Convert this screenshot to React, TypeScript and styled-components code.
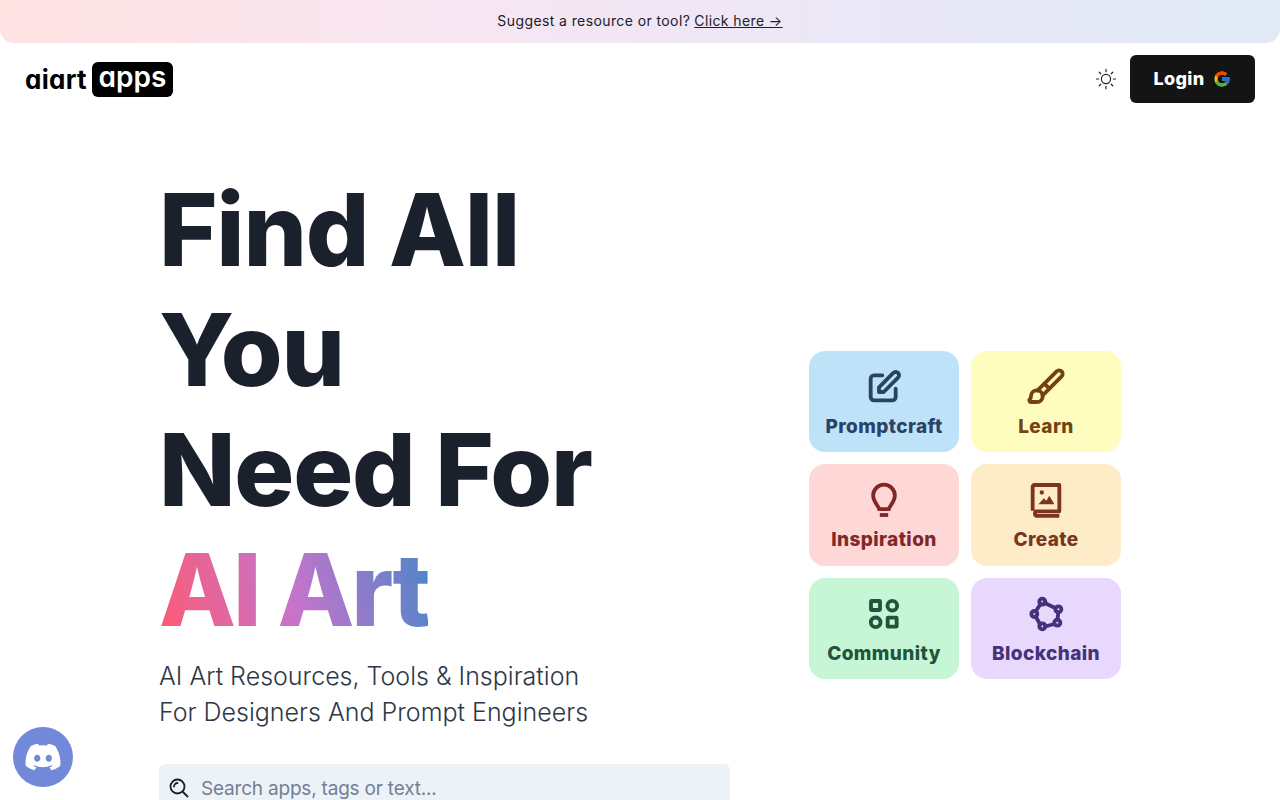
import React from 'react'
import styled, { createGlobalStyle } from 'styled-components'
import { Brush } from 'lucide-react'
import { FaDiscord } from 'react-icons/fa'
import { FcGoogle } from 'react-icons/fc'

const GlobalStyle = createGlobalStyle`
  html, body {
    margin: 0;
    height: 100%;
    overflow: hidden;
    background: #fff;
    font-family: Inter, "Open Sans", sans-serif;
    color: #1a202c;
  }
`

const Banner = styled.div`
  height: 43px;
  padding-bottom: 2px;
  box-sizing: border-box;
  display: flex;
  align-items: center;
  justify-content: center;
  gap: 4px;
  font-size: 14px;
  letter-spacing: 0.4px;
  color: #1a202c;
  border-radius: 0 0 14px 14px;
  background: linear-gradient(90deg, #fee2e2 0%, #f7e6f2 35%, #ebe7f6 65%, #e1eaf6 100%);
`

const BannerLink = styled.a`
  text-decoration: underline;
  color: inherit;
`

const Nav = styled.header`
  height: 72px;
  display: flex;
  align-items: center;
  justify-content: space-between;
  padding: 0 25px 0 25px;
`

const Logo = styled.div`
  display: flex;
  align-items: center;
  gap: 5px;
  font-size: 26px;
  font-weight: 700;
  letter-spacing: 0.3px;
  font-feature-settings: 'cv11';
  color: #000;
`

const LogoPill = styled.span`
  width: 81px;
  height: 35px;
  display: flex;
  align-items: center;
  justify-content: center;
  background: #000;
  color: #fff;
  border-radius: 6px;
  font-size: 28px;
  font-weight: 600;
  line-height: 30px;
  letter-spacing: 0;
  padding-bottom: 5px;
  box-sizing: border-box;
`

const NavActions = styled.div`
  display: flex;
  align-items: center;
  gap: 13px;
`

const LoginButton = styled.button`
  width: 125px;
  height: 48px;
  padding-bottom: 2px;
  display: flex;
  align-items: center;
  justify-content: center;
  gap: 9px;
  background: #141414;
  color: #fff;
  border: 0;
  border-radius: 6px;
  font-family: inherit;
  font-size: 18px;
  font-weight: 800;
  letter-spacing: 0.3px;
`

const Hero = styled.main`
  display: grid;
  grid-template-columns: 571px 312px;
  column-gap: 79px;
  height: 745px;
  padding: 55px 0 0 159px;
  box-sizing: border-box;
`

const HeroLeft = styled.div`
  display: flex;
  flex-direction: column;
`

const Heading = styled.h1`
  margin: 0;
  font-size: 100px;
  line-height: 120px;
  font-weight: 800;
  letter-spacing: -1.2px;
  color: #1a202c;
`

const HeadingLine = styled.span`
  display: block;
`

const GradientText = styled.span`
  display: inline-block;
  letter-spacing: -3px;
  background: linear-gradient(75deg, #ff5a70 0%, #c474cc 50%, #4a86c8 100%);
  -webkit-background-clip: text;
  background-clip: text;
  color: transparent;
`

const SubText = styled.p`
  margin: 8px 0 0;
  font-size: 25px;
  line-height: 36px;
  font-weight: 300;
  color: #2d3748;
`

const SearchBox = styled.div`
  margin-top: 34px;
  width: 571px;
  height: 48px;
  flex: none;
  display: flex;
  align-items: center;
  gap: 12px;
  padding: 0 10px;
  box-sizing: border-box;
  background: #edf2f7;
  border-radius: 6px;
  font-size: 19px;
  letter-spacing: -0.2px;
  color: #718096;
`

const CardGrid = styled.nav`
  align-self: center;
  display: grid;
  grid-template-columns: 150px 150px;
  grid-auto-rows: 101.67px;
  gap: 12px;
`

const Card = styled.a<{ $bg: string; $fg: string }>`
  display: flex;
  flex-direction: column;
  align-items: center;
  padding-top: 16px;
  box-sizing: border-box;
  gap: 6px;
  border-radius: 16px;
  background: ${(p) => p.$bg};
  color: ${(p) => p.$fg};
  font-size: 19px;
  font-weight: 800;
  line-height: 27px;
  letter-spacing: 0.4px;
  text-decoration: none;
`

const DiscordFab = styled.a`
  position: fixed;
  left: 13px;
  top: 727px;
  width: 60px;
  height: 60px;
  display: flex;
  align-items: center;
  justify-content: center;
  border-radius: 50%;
  background: #7289da;
  color: #fff;
`

function IconBase({ children }: { children: React.ReactNode }) {
  return (
    <svg width="40" height="40" viewBox="0 0 24 24" fill="none" stroke="currentColor" strokeWidth="2.300" strokeLinecap="round" strokeLinejoin="round">
      {children}
    </svg>
  )
}

const PencilIcon = () => (
  <IconBase>
    <path d="M11 5H6a2 2 0 0 0-2 2v11a2 2 0 0 0 2 2h11a2 2 0 0 0 2-2v-5m-1.414-9.414a2 2 0 1 1 2.828 2.828L11.828 15H9v-2.828l8.586-8.586z" />
  </IconBase>
)

const BulbIcon = () => (
  <IconBase>
    <path d="M9 17.500c0-2-3.500-4-3.500-8.200a6.500 6.500 0 0 1 13 0c0 4.200-3.500 6.200-3.500 8.200z" />
    <path d="M9.500 21h5" strokeLinecap="butt" />
  </IconBase>
)

const ImageBookIcon = () => (
  <IconBase>
    <path d="M4 18.500V4a1 1 0 0 1 1-1h15v15.800H6a1.700 1.700 0 0 0 0 2.700h14" strokeLinecap="butt" />
    <circle cx="9.500" cy="7.500" r="1.300" fill="currentColor" stroke="none" />
    <path d="M7.500 14.500l3.200-3.500 1.500 1.500 1.800-3 3 5z" fill="currentColor" stroke="none" />
  </IconBase>
)

const ShapesIcon = () => (
  <IconBase>
    <rect x="4.200" y="4.200" width="5.400" height="5.400" rx="0.300" />
    <circle cx="17" cy="7" r="2.900" />
    <circle cx="7" cy="17" r="2.900" />
    <rect x="14.200" y="14.200" width="5.400" height="5.400" rx="0.300" />
  </IconBase>
)

const ChainIcon = () => (
  <IconBase>
    <path d="M11 5.200 17.800 8.500M19.400 11 18.900 15.500M17 18 11.500 19.500M8.500 18.300 5.800 13.500M5.800 10.500 8.700 6" />
    <circle cx="9.800" cy="4.600" r="1.800" />
    <circle cx="19.400" cy="9.200" r="1.800" />
    <circle cx="18.800" cy="17.200" r="1.800" />
    <circle cx="9.800" cy="19.400" r="1.800" />
    <circle cx="5" cy="12" r="1.800" />
  </IconBase>
)

const SunIcon = () => (
  <svg width="22" height="22" viewBox="0 0 24 24" fill="none" stroke="#1a202c" strokeWidth="1.300" strokeLinecap="round">
    <circle cx="12" cy="12" r="5" />
    <path d="M12 1.500v2.500M12 20v2.500M1.500 12H4M20 12h2.500M4.600 4.600l1.700 1.700M17.700 17.700l1.700 1.700M4.600 19.400l1.700-1.700M17.700 6.300l1.700-1.700" />
  </svg>
)

const SearchIcon = () => (
  <svg width="20" height="20" viewBox="0 0 20 20" fill="none" stroke="#1a202c" strokeWidth="1.800" strokeLinecap="round" style={{ flex: 'none' }}>
    <circle cx="8.500" cy="8.500" r="7" />
    <path d="M14 14l4.500 4.500" />
    <path d="M5 8.500a3.500 3.500 0 0 1 3.500-3.500" />
  </svg>
)

const categories = [
  { label: 'Promptcraft', bg: '#bee3f8', fg: '#2a4365', icon: <PencilIcon /> },
  { label: 'Learn', bg: '#fefcbf', fg: '#744210', icon: <Brush size={40} strokeWidth={2.3} /> },
  { label: 'Inspiration', bg: '#fed7d7', fg: '#822727', icon: <BulbIcon /> },
  { label: 'Create', bg: '#feebc8', fg: '#7b341e', icon: <ImageBookIcon /> },
  { label: 'Community', bg: '#c6f6d5', fg: '#22543d', icon: <ShapesIcon /> },
  { label: 'Blockchain', bg: '#e9d8fd', fg: '#44337a', icon: <ChainIcon /> }
]

export default function App() {
  return (
    <>
      <GlobalStyle />
      <Banner>
        Suggest a resource or tool? <BannerLink href="#">Click here →</BannerLink>
      </Banner>
      <Nav>
        <Logo>
          aiart
          <LogoPill>apps</LogoPill>
        </Logo>
        <NavActions>
          <SunIcon />
          <LoginButton>
            Login <FcGoogle size={18} />
          </LoginButton>
        </NavActions>
      </Nav>
      <Hero>
        <HeroLeft>
          <Heading>
            <HeadingLine>Find All</HeadingLine>
            <HeadingLine>You</HeadingLine>
            <HeadingLine>Need For</HeadingLine>
            <GradientText>AI Art</GradientText>
          </Heading>
          <SubText>
            AI Art Resources, Tools &amp; Inspiration
            <br />
            For Designers And Prompt Engineers
          </SubText>
          <SearchBox>
            <SearchIcon />
            Search apps, tags or text...
          </SearchBox>
        </HeroLeft>
        <CardGrid>
          {categories.map((c) => (
            <Card key={c.label} href="#" $bg={c.bg} $fg={c.fg}>
              {c.icon}
              {c.label}
            </Card>
          ))}
        </CardGrid>
      </Hero>
      <DiscordFab href="#">
        <FaDiscord size={38} />
      </DiscordFab>
    </>
  )
}
